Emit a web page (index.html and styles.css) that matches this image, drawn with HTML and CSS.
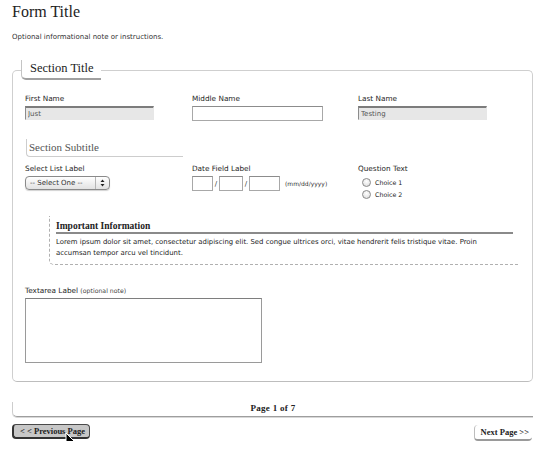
FILE: index.html
```html
<!DOCTYPE html>
<html lang="en">
<head>
<meta charset="utf-8">
<title>Form</title>
<link rel="stylesheet" href="styles.css">
</head>
<body>
<div class="page">
  <h1 class="form-title">Form Title</h1>
  <p class="form-note">Optional informational note or instructions.</p>

  <fieldset class="section">
    <legend class="section-title">Section Title</legend>

    <div class="row">
      <div class="field">
        <label class="label">First Name</label>
        <input class="text-input filled" type="text" value="Just" readonly>
      </div>
      <div class="field">
        <label class="label">Middle Name</label>
        <input class="text-input empty" type="text" value="">
      </div>
      <div class="field">
        <label class="label">Last Name</label>
        <input class="text-input filled" type="text" value="Testing" readonly>
      </div>
    </div>

    <h3 class="subtitle">Section Subtitle</h3>

    <div class="row">
      <div class="field">
        <label class="label">Select List Label</label>
        <div class="select-wrap">
          <select class="select"><option>-- Select One --</option></select>
          <span class="select-arrows">
            <svg width="5" height="8" viewBox="0 0 5 8"><path d="M2.5 0.5 L4.5 3 L0.5 3 Z" fill="#222"/><path d="M2.5 7.5 L4.5 5 L0.5 5 Z" fill="#222"/></svg>
          </span>
        </div>
      </div>
      <div class="field">
        <label class="label">Date Field Label</label>
        <div class="date-row">
          <input class="date-input mm" type="text">
          <span class="date-sep">/</span>
          <input class="date-input dd" type="text">
          <span class="date-sep">/</span>
          <input class="date-input yyyy" type="text">
          <span class="date-hint">(mm/dd/yyyy)</span>
        </div>
      </div>
      <div class="field">
        <label class="label">Question Text</label>
        <div class="choices">
          <label class="choice"><input class="radio" type="radio" name="q"><span>Choice 1</span></label>
          <label class="choice"><input class="radio" type="radio" name="q"><span>Choice 2</span></label>
        </div>
      </div>
    </div>

    <div class="info">
      <h4 class="info-title">Important Information</h4>
      <p class="info-text">Lorem ipsum dolor sit amet, consectetur adipiscing elit. Sed congue ultrices orci, vitae hendrerit felis tristique vitae. Proin accumsan tempor arcu vel tincidunt.</p>
    </div>

    <div class="textarea-field">
      <label class="label">Textarea Label <span class="label-note">(optional note)</span></label>
      <textarea class="textarea"></textarea>
    </div>
  </fieldset>

  <div class="pager">Page 1 of 7</div>

  <div class="pager-buttons">
    <button class="btn btn-prev" type="button">&lt; &lt; Previous Page</button>
    <button class="btn btn-next" type="button">Next Page &gt;&gt;</button>
    <svg class="cursor" width="11" height="16" viewBox="0 0 11 16">
      <path d="M1 1 L1 13 L3.8 10.4 L5.9 15 L7.9 14.1 L5.8 9.6 L9.6 9.6 Z" fill="#000" stroke="#fff" stroke-width="1" stroke-linejoin="round"/>
    </svg>
  </div>
</div>
</body>
</html>
```

FILE: styles.css
```css
* {
  box-sizing: border-box;
}

body {
  margin: 0;
  background: #fff;
  color: #222;
  font-family: "DejaVu Sans", Verdana, sans-serif;
}

.page {
  width: 533px;
  padding-left: 12px;
}

.form-title {
  margin: 3px 0 0;
  font: normal 16px/18px "Liberation Serif", "Times New Roman", serif;
  color: #222;
}

.form-note {
  margin: 12px 0 0;
  font-size: 7px;
  line-height: 8px;
  color: #333;
}

.section {
  margin: 19px 0 0;
  padding: 14px 12px 18px;
  border: 1px solid #cfcfcf;
  border-bottom-color: #bdbdbd;
  border-radius: 5px;
  min-width: 0;
}

.section-title {
  margin-left: -4px;
  padding: 1px 7px 3px 8px;
  font: normal 12.5px/14px "Liberation Serif", "Times New Roman", serif;
  color: #222;
  border-left: 1px solid #c4c4c4;
  border-bottom: 2px solid #a0a0a0;
  border-bottom-left-radius: 5px;
}

.row {
  display: grid;
  grid-template-columns: 167px 166px 1fr;
  align-items: start;
}

.label {
  display: block;
  margin-bottom: 3px;
  font-size: 7.3px;
  line-height: 9px;
  color: #1e1e1e;
}

.label-note {
  font-size: 6.2px;
  color: #444;
}

.text-input {
  display: block;
  width: 129px;
  height: 14px;
  margin: 0;
  padding: 0 2px;
  font: 7px "DejaVu Sans", Verdana, sans-serif;
  color: #555;
  background: #fff;
  border: 1px solid #a8a8a8;
  border-top-color: #8c8c8c;
  border-radius: 0;
  outline: none;
}

.text-input.filled {
  background: #e7e7e7;
  border-top: 2px solid #7c7c7c;
  border-left-color: #8c8c8c;
  border-right-color: #e7e7e7;
  border-bottom-color: #e7e7e7;
}

.text-input.empty {
  width: 131px;
  height: 15px;
  margin-top: 1px;
}

.subtitle {
  width: 157px;
  margin: 18px 0 7px 1px;
  padding: 2px 0 2px 2px;
  font: normal 11px/13px "Liberation Serif", "Times New Roman", serif;
  color: #555;
  border-left: 1px solid #cdcdcd;
  border-bottom: 1px solid #cdcdcd;
  border-bottom-left-radius: 4px;
}

.select-wrap {
  display: flex;
  width: 85px;
  height: 14px;
  border: 1px solid #8a8a8a;
  border-radius: 4px;
  background: linear-gradient(#ffffff, #e2e2e2);
  box-shadow: 0 1px 1px rgba(0, 0, 0, 0.18);
  overflow: hidden;
}

.select {
  flex: 1;
  min-width: 0;
  height: 12px;
  margin: 0;
  padding: 0 0 0 4px;
  border: none;
  background: transparent;
  -webkit-appearance: none;
  appearance: none;
  font: 7px/12px "DejaVu Sans", Verdana, sans-serif;
  color: #333;
  outline: none;
}

.select-arrows {
  display: flex;
  align-items: center;
  justify-content: center;
  width: 14px;
  border-left: 1px solid #b5b5b5;
}

.date-row {
  display: flex;
  align-items: center;
}

.date-input {
  height: 15px;
  margin: 0;
  padding: 0 2px;
  border: 1px solid #a8a8a8;
  border-top-color: #8c8c8c;
  background: #fff;
  font: 7px "DejaVu Sans", Verdana, sans-serif;
  outline: none;
}

.date-input.mm { width: 21px; }
.date-input.dd { width: 24px; }
.date-input.yyyy { width: 31px; }

.date-sep {
  width: 6px;
  text-align: center;
  font-size: 7px;
  color: #333;
}

.date-hint {
  margin-left: 5px;
  font-size: 6px;
  color: #333;
}

.choices {
  display: flex;
  flex-direction: column;
  padding-left: 4px;
}

.choice {
  display: flex;
  align-items: center;
  gap: 4px;
  height: 12px;
  font-size: 6.3px;
  color: #222;
}

.radio {
  -webkit-appearance: none;
  appearance: none;
  width: 9px;
  height: 9px;
  margin: 0;
  border: 1px solid #8a8a8a;
  border-radius: 50%;
  background: radial-gradient(circle at 50% 35%, #ffffff, #d8d8d8);
}

.info {
  margin: 16px 1px 0 24px;
  padding: 5px 6px 6px 6px;
  border-left: 1px dashed #b0b0b0;
  border-bottom: 1px dashed #b0b0b0;
  border-bottom-left-radius: 5px;
}

.info-title {
  margin: 0;
  font: bold 9.5px/11px "Liberation Serif", "Times New Roman", serif;
  color: #222;
  border-bottom: 2px solid #8a8a8a;
}

.info-text {
  margin: 3px 10px 0 0;
  font-size: 6.9px;
  line-height: 10.5px;
  color: #222;
}

.textarea-field {
  margin-top: 21px;
}

.textarea {
  display: block;
  width: 237px;
  height: 65px;
  margin: 0;
  border: 1px solid #9a9a9a;
  border-top-color: #7e7e7e;
  background: #fff;
  resize: none;
  outline: none;
}

.pager {
  margin-top: 20px;
  padding: 0 0 2px;
  border-left: 1px solid #cdcdcd;
  border-bottom: 1px solid #9e9e9e;
  border-bottom-left-radius: 5px;
  box-shadow: 0 1px 0 #d8d8d8;
  text-align: center;
  font: bold 9px/12px "Liberation Serif", "Times New Roman", serif;
  letter-spacing: 0.3px;
  color: #222;
}

.pager-buttons {
  position: relative;
  display: flex;
  justify-content: space-between;
  align-items: flex-start;
  margin-top: 7px;
  padding-right: 1px;
}

.btn {
  margin: 0;
  font: bold 8.5px/12px "Liberation Serif", "Times New Roman", serif;
  color: #222;
  cursor: pointer;
}

.btn-prev {
  height: 15px;
  padding: 0 4px 0 6px;
  background: #c7c7c7;
  border: 1px solid #4a4a4a;
  border-left: 2px solid #333;
  border-bottom: 2px solid #333;
  border-radius: 4px;
}

.btn-next {
  height: 16px;
  margin-top: 1px;
  padding: 0 3px 0 6px;
  background: #fff;
  border: none;
  border-left: 1px solid #bdbdbd;
  border-bottom: 2px solid #9a9a9a;
  border-radius: 4px;
}

.cursor {
  position: absolute;
  left: 53px;
  top: 8px;
}
```
